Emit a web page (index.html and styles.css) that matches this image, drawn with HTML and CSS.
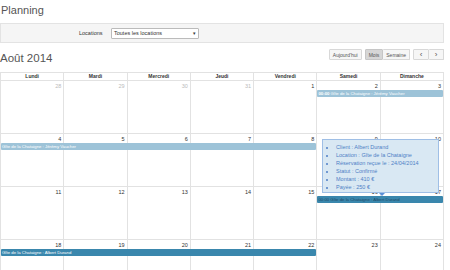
FILE: index.html
```html
<!DOCTYPE html>
<html lang="fr">
<head>
    <meta charset="UTF-8">
    <title>Planning</title>
    <link rel="stylesheet" href="styles.css">
</head>
<body>
    <h1 class="titre">Planning</h1>
    <div class="filtre">
        <label>Locations</label>
        <div class="select">Toutes les locations <span class="fleche">&#9662;</span></div>
    </div>

    <div class="toolbar">
        <h2>Août 2014</h2>
        <div class="boutons">
            <span class="btn">Aujourd'hui</span>
            <div class="groupe">
                <span class="btn actif">Mois</span><span class="btn">Semaine</span>
            </div>
            <div class="groupe">
                <span class="btn fl">&#8249;</span><span class="btn fl">&#8250;</span>
            </div>
        </div>
    </div>

    <div class="calendrier">
        <div class="entete">
            <div>Lundi</div><div>Mardi</div><div>Mercredi</div><div>Jeudi</div><div>Vendredi</div><div>Samedi</div><div>Dimanche</div>
        </div>

        <div class="semaine">
            <div class="jour autre">28</div><div class="jour autre">29</div><div class="jour autre">30</div><div class="jour autre">31</div><div class="jour">1</div><div class="jour">2</div><div class="jour">3</div>
            <div class="evt clair" style="grid-column: 6 / 8"><b>00:00</b> Gîte de la Chataigne : Jérémy Vaucher</div>
        </div>

        <div class="semaine">
            <div class="jour">4</div><div class="jour">5</div><div class="jour">6</div><div class="jour">7</div><div class="jour">8</div><div class="jour">9</div><div class="jour">10</div>
            <div class="evt clair" style="grid-column: 1 / 6">Gîte de la Chataigne : Jérémy Vaucher</div>
        </div>

        <div class="semaine">
            <div class="jour">11</div><div class="jour">12</div><div class="jour">13</div><div class="jour">14</div><div class="jour">15</div><div class="jour">16</div><div class="jour">17</div>
            <div class="evt fonce survol" style="grid-column: 6 / 8">00:00 Gîte de la Chataigne : Albert Durand</div>
        </div>

        <div class="semaine">
            <div class="jour">18</div><div class="jour">19</div><div class="jour">20</div><div class="jour">21</div><div class="jour">22</div><div class="jour">23</div><div class="jour">24</div>
            <div class="evt fonce" style="grid-column: 1 / 6">Gîte de la Chataigne : Albert Durand</div>
        </div>

        <div class="infobulle">
            <ul>
                <li>Client : Albert Durand</li>
                <li>Location : Gîte de la Chataigne</li>
                <li>Réservation reçue le : 24/04/2014</li>
                <li>Statut : Confirmé</li>
                <li>Montant : 410 €</li>
                <li>Payée : 250 €</li>
            </ul>
        </div>
    </div>
</body>
</html>
```

FILE: styles.css
```css
body {
    margin: 0;
    font-family: "Liberation Sans", Arial, sans-serif;
    color: #333;
    background-color: white;
}

h1.titre {
    margin: 0;
    padding: 4px 0 0 1px;
    height: 19px;
    font-size: 11px;
    font-weight: normal;
    color: #555;
}

.filtre {
    width: 442px;
    height: 18px;
    background-color: #f5f5f5;
    border: 1px solid #e3e3e3;
    display: flex;
    align-items: center;
    font-size: 5.5px;
}

.filtre label {
    margin-left: 78px;
    width: 32px;
}

.select {
    width: 82px;
    height: 9px;
    padding: 0 2px;
    background-color: white;
    border: 1px solid #bbb;
    border-radius: 1px;
    display: flex;
    align-items: center;
    justify-content: space-between;
}

.fleche {
    font-size: 5px;
}

.toolbar {
    width: 444px;
    height: 29px;
    display: flex;
    justify-content: space-between;
    align-items: flex-start;
}

.toolbar h2 {
    margin: 0;
    padding-top: 9px;
    font-size: 11.5px;
    font-weight: normal;
    color: #555;
}

.boutons {
    display: flex;
    gap: 3px;
    margin-top: 6px;
}

.groupe {
    display: flex;
}

.btn {
    display: inline-flex;
    align-items: center;
    justify-content: center;
    height: 9px;
    padding: 0 3px;
    font-size: 5px;
    color: #555;
    background-color: #f6f6f6;
    border: 1px solid #d8d8d8;
    border-radius: 1px;
}

.groupe .btn + .btn {
    border-left: none;
}

.btn.actif {
    background-color: #d6d6d6;
    border-color: #c6c6c6;
}

.btn.fl {
    width: 8px;
    font-size: 8px;
    padding: 0 3px;
}

.calendrier {
    position: relative;
    width: 443px;
    border-left: 1px solid #e2e2e2;
    border-top: 1px solid #e2e2e2;
}

.entete {
    display: grid;
    grid-template-columns: repeat(7, minmax(0, 1fr));
    height: 8px;
}

.entete div {
    border-right: 1px solid #e2e2e2;
    border-bottom: 1px solid #e2e2e2;
    font-size: 5px;
    font-weight: bold;
    text-align: center;
    line-height: 7px;
}

.semaine {
    display: grid;
    grid-template-columns: repeat(7, minmax(0, 1fr));
    grid-template-rows: 9px 8px 1fr;
    height: 53px;
}

.jour {
    grid-row: 1 / 4;
    border-right: 1px solid #e2e2e2;
    border-bottom: 1px solid #e2e2e2;
    font-size: 5.5px;
    text-align: right;
    padding: 2px 2px 0 0;
}

.jour:nth-child(1) { grid-column: 1; }
.jour:nth-child(2) { grid-column: 2; }
.jour:nth-child(3) { grid-column: 3; }
.jour:nth-child(4) { grid-column: 4; }
.jour:nth-child(5) { grid-column: 5; }
.jour:nth-child(6) { grid-column: 6; }
.jour:nth-child(7) { grid-column: 7; }

.jour.autre {
    color: #bbb;
}

.evt {
    grid-row: 2;
    z-index: 1;
    margin: 0 1px 1px 0;
    padding-left: 1px;
    font-size: 4.3px;
    line-height: 7px;
    color: white;
    border-radius: 1px;
    white-space: nowrap;
    overflow: hidden;
}

.evt.clair {
    background-color: #9dc3d8;
}

.evt.fonce {
    background-color: #3a87ad;
}

.evt.survol {
    color: #1f4a66;
}

.infobulle {
    position: absolute;
    left: 321px;
    top: 66px;
    width: 115px;
    height: 52px;
    background-color: #d9e8f3;
    border: 1px solid #9fbfe6;
    z-index: 2;
}

.infobulle::after {
    content: "";
    position: absolute;
    left: 56px;
    bottom: -4px;
    border-left: 3px solid transparent;
    border-right: 3px solid transparent;
    border-top: 3px solid #5b8fd6;
}

.infobulle ul {
    margin: 0;
    padding: 3px 0 0 13px;
    font-size: 5.5px;
    line-height: 8px;
    color: #4f7fc6;
}
```
